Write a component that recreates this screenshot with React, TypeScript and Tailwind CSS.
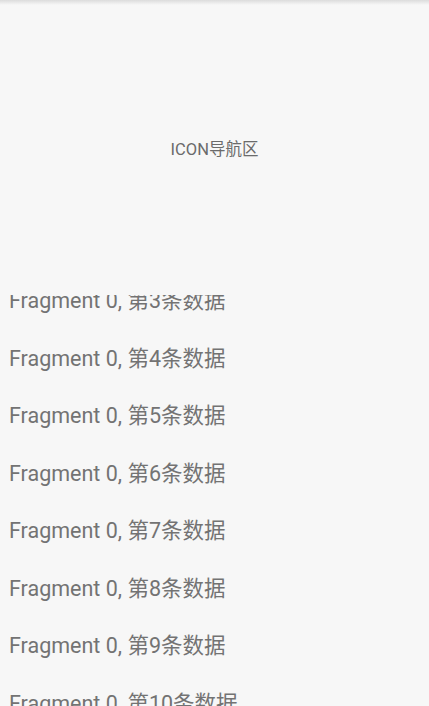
const rows = Array.from({ length: 9 }, (_, i) => i + 2);

export default function App() {
  return (
    <div
      className="h-[706px] w-[429px] overflow-hidden bg-[#f7f7f7]"
      style={{ fontFamily: 'Roboto, "Noto Sans CJK SC", sans-serif' }}
    >
      {/* top shadow under the action bar */}
      <div className="h-[5px] bg-gradient-to-b from-[#dcdcdc] to-[#f7f7f7]" />

      {/* icon nav area */}
      <div className="flex h-[290px] items-center justify-center">
        <span className="text-[16.5px] text-[#6b6b6b]">ICON导航区</span>
      </div>

      {/* list */}
      <div className="h-[411px] overflow-hidden">
        <div className="-mt-[79.75px]">
          {rows.map((n) => (
            <div key={n} className="flex h-[57.5px] items-center pl-[9px]">
              <span className="text-[21.5px] text-[#737373]">Fragment 0, 第{n}条数据</span>
            </div>
          ))}
        </div>
      </div>
    </div>
  );
}
